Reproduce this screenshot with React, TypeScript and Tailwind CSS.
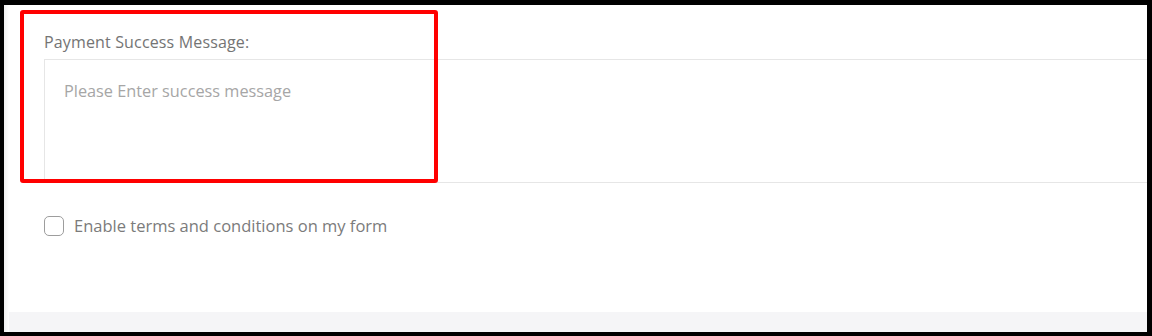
import React from 'react';

const App: React.FC = () => {
  return (
    <div className="w-[1152px] h-[336px] bg-black pt-[5px] pl-[4px] pr-[5px] pb-[4px]" style={{ fontFamily: '"Open Sans", "Noto Sans", sans-serif' }}>
      <div className="relative w-full h-full bg-white flex flex-col overflow-hidden">
        {/* left edge shade */}
        <div className="absolute left-0 top-0 bottom-0 w-[5px] bg-gradient-to-r from-[#f0f0f0] to-white" />

        {/* Form content */}
        <div className="flex-1 pl-[40px]">
          <label className="block pt-[27px] text-[16px] tracking-[0.15px] leading-[20px] text-[#747474]">
            Payment Success Message:
          </label>
          <div className="mt-[7px] -mr-[20px] h-[124px] border border-[#e6e6e6] border-r-0 px-[19px] pt-[19px]">
            <span className="text-[16.3px] leading-[24px] text-[#a6a6a6]">Please Enter success message</span>
          </div>

          <label className="flex items-center gap-[10px] mt-[31px]">
            <span className="w-[20px] h-[20px] rounded-[5px] border border-[#9d9d9d] bg-white" />
            <span className="text-[16.5px] leading-[24px] text-[#7b7b7b]">Enable terms and conditions on my form</span>
          </label>
        </div>

        {/* bottom band */}
        <div className="h-[20px] bg-[#f5f5f7]" />

        {/* red highlight annotation */}
        <div className="absolute left-[16px] top-[5px] w-[418px] h-[173px] border-[4px] border-[#ff0000] rounded-[3px]" />
      </div>
    </div>
  );
};

export default App;
